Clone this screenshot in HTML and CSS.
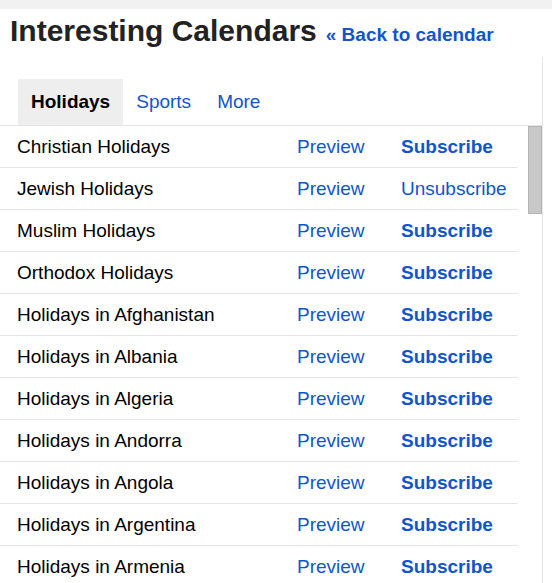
FILE: index.html
```html
<!DOCTYPE html>
<html lang="en">
<head>
<meta charset="utf-8">
<title>Interesting Calendars</title>
<link rel="stylesheet" href="styles.css">
</head>
<body>
<div class="topbar"></div>
<header class="head">
  <h1 class="title">Interesting Calendars</h1>
  <a class="back" href="#">« Back to calendar</a>
</header>
<div class="panel">
  <nav class="tabs">
    <span class="tab tab-active">Holidays</span>
    <a class="tab" href="#">Sports</a>
    <a class="tab" href="#">More</a>
  </nav>
  <div class="content">
    <ul class="list">
      <li class="row"><span class="name">Christian Holidays</span><a class="preview" href="#">Preview</a><a class="sub" href="#">Subscribe</a></li>
      <li class="row"><span class="name">Jewish Holidays</span><a class="preview" href="#">Preview</a><a class="unsub" href="#">Unsubscribe</a></li>
      <li class="row"><span class="name">Muslim Holidays</span><a class="preview" href="#">Preview</a><a class="sub" href="#">Subscribe</a></li>
      <li class="row"><span class="name">Orthodox Holidays</span><a class="preview" href="#">Preview</a><a class="sub" href="#">Subscribe</a></li>
      <li class="row"><span class="name">Holidays in Afghanistan</span><a class="preview" href="#">Preview</a><a class="sub" href="#">Subscribe</a></li>
      <li class="row"><span class="name">Holidays in Albania</span><a class="preview" href="#">Preview</a><a class="sub" href="#">Subscribe</a></li>
      <li class="row"><span class="name">Holidays in Algeria</span><a class="preview" href="#">Preview</a><a class="sub" href="#">Subscribe</a></li>
      <li class="row"><span class="name">Holidays in Andorra</span><a class="preview" href="#">Preview</a><a class="sub" href="#">Subscribe</a></li>
      <li class="row"><span class="name">Holidays in Angola</span><a class="preview" href="#">Preview</a><a class="sub" href="#">Subscribe</a></li>
      <li class="row"><span class="name">Holidays in Argentina</span><a class="preview" href="#">Preview</a><a class="sub" href="#">Subscribe</a></li>
      <li class="row"><span class="name">Holidays in Armenia</span><a class="preview" href="#">Preview</a><a class="sub" href="#">Subscribe</a></li>
    </ul>
    <div class="gutter"><div class="thumb"></div></div>
  </div>
</div>
</body>
</html>
```

FILE: styles.css
```css
html, body {
  margin: 0;
  padding: 0;
  background: #fff;
}
body {
  width: 552px;
  height: 583px;
  overflow: hidden;
  font-family: "Liberation Sans", Arial, Helvetica, sans-serif;
  color: #000;
}
a {
  color: #1155cc;
  text-decoration: none;
}
.topbar {
  height: 9px;
  background: #f1f1f1;
}
.head {
  display: flex;
  align-items: baseline;
  height: 48px;
  box-sizing: border-box;
  padding: 5px 0 0 10px;
}
.title {
  margin: 0;
  font-size: 30px;
  line-height: 34px;
  font-weight: bold;
  color: #222;
}
.back {
  margin-left: 9px;
  font-size: 19px;
  font-weight: bold;
}
.panel {
  width: 543px;
  box-sizing: border-box;
  border-right: 1px solid #e5e5e5;
}
.tabs {
  display: flex;
  padding: 22px 0 0 18px;
  border-bottom: 1px solid #e5e5e5;
}
.tab {
  height: 46px;
  line-height: 46px;
  padding: 0 13px;
  font-size: 19px;
}
.tab-active {
  background: #eee;
  font-weight: bold;
  color: #000;
}
.content {
  display: flex;
}
.list {
  list-style: none;
  margin: 0;
  padding: 0;
  width: 518px;
}
.row {
  display: grid;
  grid-template-columns: 280px 104px 1fr;
  padding-left: 17px;
  height: 41px;
  line-height: 41px;
  font-size: 19px;
  border-bottom: 1px solid #e5e5e5;
  white-space: nowrap;
}
.sub {
  font-weight: bold;
}
.gutter {
  width: 24px;
  display: flex;
  justify-content: flex-end;
  align-items: flex-start;
}
.thumb {
  width: 14px;
  height: 88px;
  box-sizing: border-box;
  background: #c8c8c8;
  border: 1px solid #b4b4b4;
}
```
